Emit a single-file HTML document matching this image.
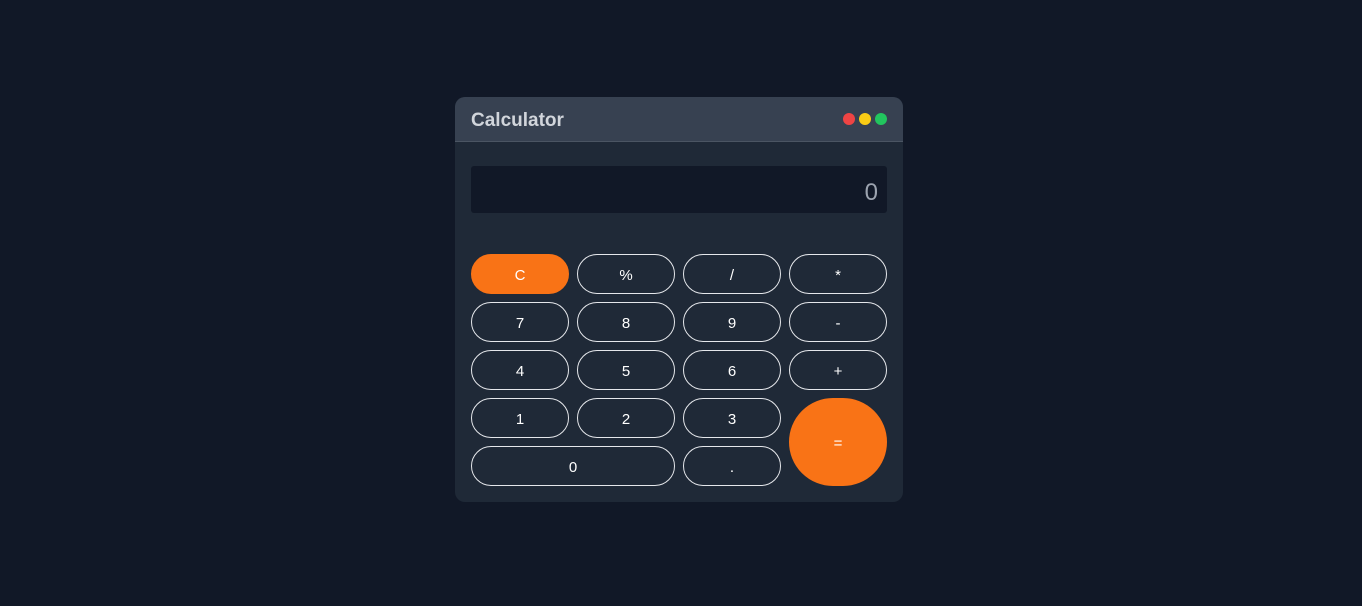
<!DOCTYPE html>
<html><head><style>
*{box-sizing:border-box;margin:0;padding:0}
body{width:1362px;height:606px;background:#111827;font-family:"Liberation Sans",sans-serif;position:relative}
.card{position:absolute;left:455px;top:97px;width:448px;height:405px;background:#1f2937;border-radius:10px;overflow:hidden}
.hd{height:45px;background:#374151;border-bottom:1px solid #4b5563;position:relative}
.hd h1{position:absolute;left:16px;top:13px;font-size:19px;font-weight:bold;color:#d1d5db}
.dot{position:absolute;top:16px;width:12px;height:12px;border-radius:50%}
.disp{position:absolute;left:16px;top:69px;width:416px;height:47px;background:#111827;border-radius:3px;color:#9ca3af;font-size:24px;text-align:right;padding:13px 9px 0 0}
.b{position:absolute;width:98px;height:40px;border:1px solid #e5e7eb;border-radius:20px;color:#fff;font-size:15px;display:flex;align-items:center;justify-content:center;padding-top:2px}
.o{background:#f97316;border-color:#f97316}
</style></head><body>
<div class="card">
<div class="hd"><h1>Calculator</h1>
<div class="dot" style="left:388px;background:#ef4444"></div>
<div class="dot" style="left:404px;background:#facc15"></div>
<div class="dot" style="left:420px;background:#22c55e"></div></div>
<div class="disp">0</div>
<div class="b o" style="left:16px;top:157px">C</div>
<div class="b" style="left:122px;top:157px">%</div>
<div class="b" style="left:228px;top:157px">/</div>
<div class="b" style="left:334px;top:157px">*</div>
<div class="b" style="left:16px;top:205px">7</div>
<div class="b" style="left:122px;top:205px">8</div>
<div class="b" style="left:228px;top:205px">9</div>
<div class="b" style="left:334px;top:205px">-</div>
<div class="b" style="left:16px;top:253px">4</div>
<div class="b" style="left:122px;top:253px">5</div>
<div class="b" style="left:228px;top:253px">6</div>
<div class="b" style="left:334px;top:253px">+</div>
<div class="b" style="left:16px;top:301px">1</div>
<div class="b" style="left:122px;top:301px">2</div>
<div class="b" style="left:228px;top:301px">3</div>
<div class="b o" style="left:334px;top:301px;height:88px;border-radius:44px">=</div>
<div class="b" style="left:16px;top:349px;width:204px">0</div>
<div class="b" style="left:228px;top:349px">.</div>
</div>
</body></html>
